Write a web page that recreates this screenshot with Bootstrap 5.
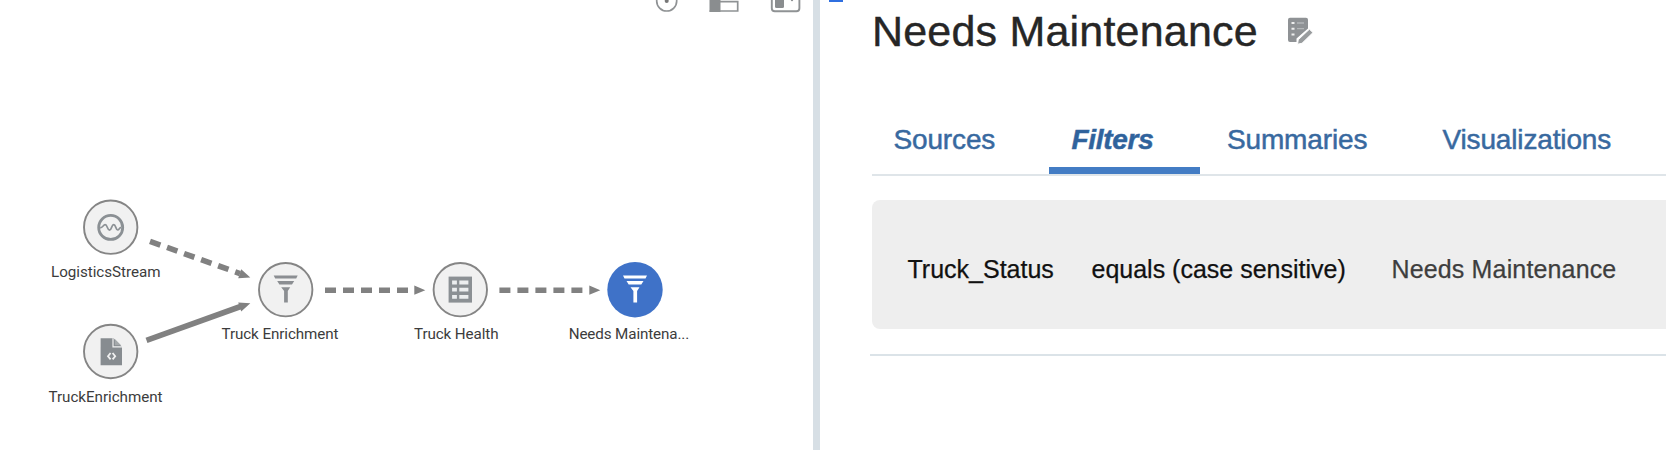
<!DOCTYPE html>
<html lang="en">
<head>
<meta charset="utf-8">
<title>Needs Maintenance</title>
<link href="https://cdn.jsdelivr.net/npm/bootstrap@5.3.0/dist/css/bootstrap.min.css" rel="stylesheet">
<style>
body{font-family:"Liberation Sans",Arial,sans-serif;background:#fff;height:450px}
.graph-pane{width:812.5px}
.graph-pane svg{display:block}
.graph-pane text{font-family:Roboto,sans-serif;font-size:15.2px;fill:#3c3c3c}
.splitter{width:7px;background:#d7dfe5}
.detail-pane{padding-left:52.5px}
.marker{width:14px;height:2px;background:#2f6fe0;margin-left:-43px}
.title-row{height:58px;padding-top:4px;gap:30px}
.title-row h1{font-size:43px;line-height:50px;color:#262626;letter-spacing:.2px;font-weight:400;margin-left:-1px;-webkit-text-stroke:.4px #262626}
.title-row svg{margin-top:10px}
.detail-tabs{margin-top:51px;height:65px;border-bottom:2px solid #dfe5e9}
.detail-tabs .nav-link{color:#38699f;font-size:28px;line-height:32px;padding:13px 0 0;border-radius:0;height:63px;letter-spacing:-.15px;-webkit-text-stroke:.5px #38699f;white-space:nowrap}
.detail-tabs .nav-link:hover{color:#38699f}
.detail-tabs .nav-link.active{font-weight:700;font-style:italic;border-bottom:7px solid #437cc4;color:#2f629c;letter-spacing:-.3px}
.t1{width:176.5px;padding-left:21.5px!important}
.t2{width:151.5px;padding-left:23px!important}
.t3{width:215px;padding-left:27px!important}
.t4{padding-left:27.5px!important}
.filter-card{margin-top:23.5px;height:129.5px;background:#eee;border-radius:8px 0 0 8px;padding:11px 0 0 35.5px;font-size:25px;color:#111;white-space:nowrap;-webkit-text-stroke:.25px}
.f1{width:184px}.f2{width:300px}.f3{color:#3e3e3e;letter-spacing:.15px}
.end-rule{height:2px;background:#dbe3e8;margin:25px 0 0 -2px}
</style>
</head>
<body class="d-flex overflow-hidden">
<section class="graph-pane flex-shrink-0">
<svg width="812" height="450" viewBox="0 0 812 450">
  <defs>
    <g id="funnel"><path d="M-12 -14.5H12L10.5 -11.3H-10.5ZM-8.5 -9H8.5L6.3 -5.3H-6.3ZM-4.5 -2.6H4.5L2.1 1V12.5H-1.6V1Z"/></g>
  </defs>
  <!-- view toolbar -->
  <g fill="none" stroke="#8f9294" stroke-width="1.7">
    <circle cx="666.7" cy="1" r="10"/>
    <circle cx="666.7" cy="1" r="2" fill="#777" stroke="none"/>
    <rect x="709.5" y="-8" width="11" height="20" fill="#8a8d8f" stroke="none"/>
    <path d="M720 1.6H737.7V11H709.6"/>
    <rect x="771.8" y="-12" width="27.6" height="23.2" rx="3" stroke-width="1.9"/>
    <rect x="775" y="-8" width="9" height="16" rx="1.5" fill="#8a8d8f" stroke="none"/>
    <circle cx="792" cy="0" r="1.2" fill="#8f9294" stroke="none"/>
  </g>
  <!-- edges -->
  <g stroke="#818181" stroke-width="5.6" fill="none">
    <path d="M150 241.3L240 273.6" stroke-dasharray="11 7.1"/>
    <path d="M146.5 340.3L242 306"/>
    <path d="M325 290.2H409M499.4 290.2H583.4" stroke-dasharray="11 7"/>
  </g>
  <g fill="#818181">
    <path d="M414.3 285.6L425.3 290.2L414.3 294.8ZM589.3 285.6L600.3 290.2L589.3 294.8Z"/>
    <path d="M241.2 269.2L250.3 277.5L238.2 278.2Z M238.2 302.6L250.3 303.3L241.2 311.6Z"/>
  </g>
  <!-- nodes -->
  <g fill="#f1f1f1" stroke="#858585" stroke-width="1.9">
    <circle cx="110.7" cy="227.2" r="26.7"/>
    <circle cx="110.7" cy="351.5" r="26.7"/>
    <circle cx="285.7" cy="289.7" r="26.7"/>
    <circle cx="460.3" cy="289.7" r="26.7"/>
  </g>
  <circle cx="635" cy="289.7" r="27.7" fill="#3f72c8"/>
  <g transform="translate(110.7 227.4)" fill="none" stroke="#8b9094">
    <circle r="12" stroke-width="2.8"/>
    <path d="M-10.5 0C-8 1 -7.5 -2.8 -5.6 -2.8C-3.2 -2.8 -3.4 2.8 -1.2 2.8C1 2.8 .8 -2.8 3 -2.8C5.2 -2.8 5 2.6 7 2.6C8.6 2.6 8.6 0 10.5 0" stroke-width="1.7"/>
  </g>
  <g transform="translate(100.6 338.2)">
    <path d="M0 0H13L21.4 8.5V27H0Z" fill="#878c90"/>
    <path d="M12.4 0V8.7H21.4" fill="none" stroke="#f1f1f1" stroke-width="1.2"/>
    <path d="M14.2 .8V7H20.5Z" fill="#a5a9ab"/>
    <path d="M10 14.8L7.4 18L10 21.2M12 14.8L14.6 18L12 21.2" fill="none" stroke="#f1f1f1" stroke-width="1.8"/>
  </g>
  <use href="#funnel" x="285.7" y="289.9" fill="#8b8e92"/>
  <use href="#funnel" x="635" y="289.9" fill="#fff"/>
  <g transform="translate(448.6 276.6)">
    <rect width="23.4" height="26" fill="#8b9094"/>
    <path d="M3.5 4H8.3V7.8H3.5ZM3.5 11.2H8.3V15H3.5ZM3.5 18.4H8.3V22.2H3.5ZM10.7 4H19.8V7.8H10.7ZM10.7 11.2H19.8V15H10.7ZM10.7 18.4H19.8V22.2H10.7Z" fill="#eceeef"/>
  </g>
  <text x="51" y="277" textLength="109.5">LogisticsStream</text>
  <text x="48.5" y="401.5" textLength="114">TruckEnrichment</text>
  <text x="221.5" y="338.5" textLength="117">Truck Enrichment</text>
  <text x="414" y="338.5" textLength="84.5">Truck Health</text>
  <text x="568.7" y="338.5" textLength="120.5">Needs Maintena...</text>
</svg>
</section>
<div class="splitter flex-shrink-0"></div>
<main class="detail-pane flex-grow-1">
  <div class="marker"></div>
  <header class="title-row d-flex">
    <h1 class="m-0 ms-n1">Needs Maintenance</h1>
    <svg width="27" height="30" viewBox="0 0 27 30">
      <path d="M2 1.7H18Q20 1.7 20 3.7V12.5L8.5 22.5V26H2Q0 26 0 24V3.7Q0 1.7 2 1.7Z" fill="#8f9295"/>
      <path d="M3.5 7H6.5M3.5 12.7H6.5M3.5 18.4H6.5" stroke="#eee" stroke-width="2"/>
      <path d="M9 7H16M9 12.7H16" stroke="#b4b7b9" stroke-width="1.3"/>
      <path d="M10.2 23.8L21.4 13.2L25 16.6L14 27.3L9.6 28.2Z" fill="#999c9e" stroke="#fff" stroke-width="1"/>
    </svg>
  </header>
  <nav class="nav detail-tabs flex-nowrap">
    <a class="nav-link t1" href="#">Sources</a>
    <a class="nav-link active t2" href="#">Filters</a>
    <a class="nav-link t3" href="#">Summaries</a>
    <a class="nav-link t4" href="#">Visualizations</a>
  </nav>
  <div class="filter-card d-flex align-items-center">
    <span class="f1">Truck_Status</span>
    <span class="f2">equals (case sensitive)</span>
    <span class="f3">Needs Maintenance</span>
  </div>
  <div class="end-rule"></div>
</main>
<script src="https://cdn.jsdelivr.net/npm/bootstrap@5.3.0/dist/js/bootstrap.bundle.min.js"></script>
</body>
</html>
